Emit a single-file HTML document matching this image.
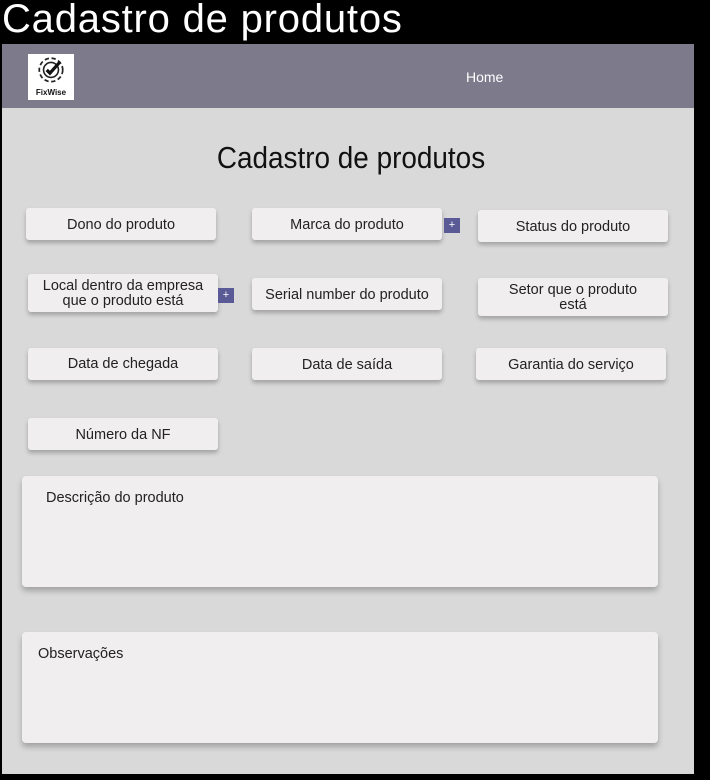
<!DOCTYPE html>
<html><head><meta charset="utf-8"><style>
*{margin:0;padding:0;box-sizing:border-box}
body{width:710px;height:780px;background:#000;position:relative;overflow:hidden;font-family:"Liberation Sans",sans-serif}
.t{position:absolute;left:2px;top:-4px;color:#fff;font-size:40px;line-height:46px;letter-spacing:0.8px}
.panel{position:absolute;left:2px;top:44px;width:692px;height:730px;background:#d9d9d9}
.hdr{position:absolute;left:2px;top:44px;width:692px;height:64px;background:#7d7a8b}
.logo{position:absolute;left:28px;top:54px;width:46px;height:46px;background:#fff;text-align:center}
.logo span{position:absolute;left:0;right:0;bottom:3px;font-size:8px;font-weight:bold;color:#111}
.home{position:absolute;left:466px;top:69px;color:#fff;font-size:14px}
h1{position:absolute;left:0;width:702px;text-align:center;top:140px;font-weight:normal;font-size:31px;color:#111;transform:scaleX(0.9)}
.b{position:absolute;background:#f0eeef;border-radius:3px;box-shadow:0 3px 4px rgba(0,0,0,.25);font-size:14.5px;color:#222;display:flex;align-items:center;justify-content:center;text-align:center;line-height:15px;padding-top:2px}
.p{position:absolute;width:16px;height:15px;background:#5a5a96;color:#fff;font-size:11px;text-align:center;line-height:15px}
.big{position:absolute;background:#f0eeef;border-radius:4px;box-shadow:0 4px 6px rgba(0,0,0,.25);font-size:14.5px;color:#222}
</style></head><body>
<div class="t">Cadastro de produtos</div>
<div class="panel"></div>
<div class="hdr"></div>
<div class="logo"><svg width="34" height="32" viewBox="0 0 30 30" style="margin-top:1px"><circle cx="15" cy="14" r="11" fill="none" stroke="#222" stroke-width="1.6" stroke-dasharray="4 2.5"/><circle cx="15" cy="14" r="7" fill="none" stroke="#222" stroke-width="1.5"/><path d="M11 14l3 3 9-10" fill="none" stroke="#111" stroke-width="3"/></svg><span>FixWise</span></div>
<div class="home">Home</div>
<h1>Cadastro de produtos</h1>
<div class="b" style="left:26px;top:208px;width:190px;height:32px">Dono do produto</div>
<div class="b" style="left:252px;top:208px;width:190px;height:32px">Marca do produto</div>
<div class="p" style="left:444px;top:218px">+</div>
<div class="b" style="left:478px;top:210px;width:190px;height:32px">Status do produto</div>
<div class="b" style="left:28px;top:274px;width:190px;height:38px">Local dentro da empresa<br>que o produto está</div>
<div class="p" style="left:218px;top:288px">+</div>
<div class="b" style="left:252px;top:278px;width:190px;height:32px">Serial number do produto</div>
<div class="b" style="left:478px;top:278px;width:190px;height:38px">Setor que o produto<br>está</div>
<div class="b" style="left:28px;top:348px;width:190px;height:32px;padding-bottom:2px">Data de chegada</div>
<div class="b" style="left:252px;top:348px;width:190px;height:32px">Data de saída</div>
<div class="b" style="left:476px;top:348px;width:190px;height:32px">Garantia do serviço</div>
<div class="b" style="left:28px;top:418px;width:190px;height:32px">Número da NF</div>
<div class="big" style="left:22px;top:476px;width:636px;height:111px;padding:14px 24px">Descrição do produto</div>
<div class="big" style="left:22px;top:632px;width:636px;height:111px;padding:14px 16px">Observações</div>
</body></html>
